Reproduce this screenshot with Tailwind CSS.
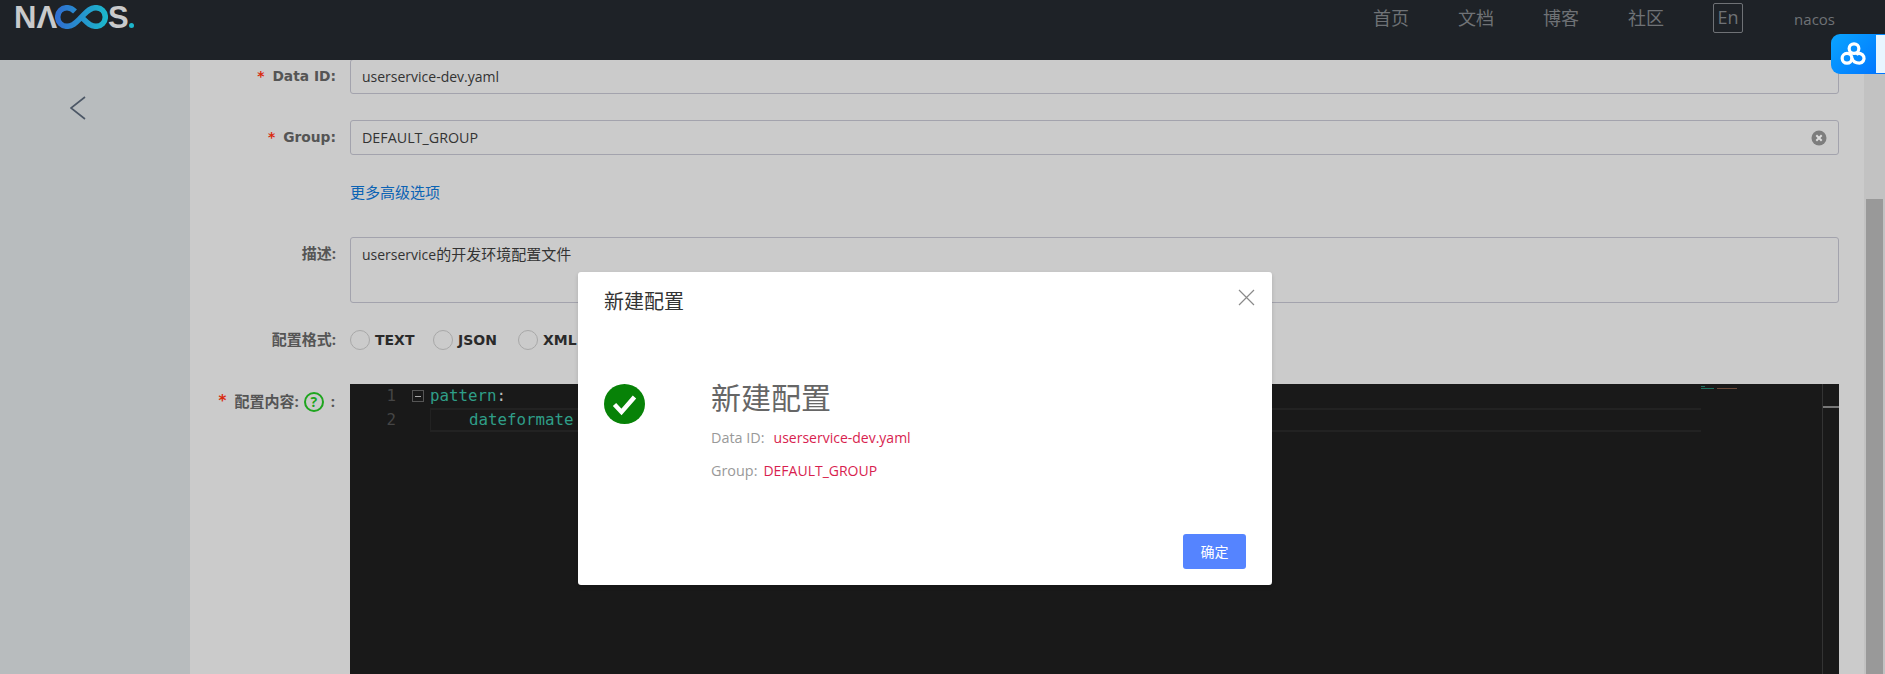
<!DOCTYPE html>
<html lang="zh-CN">
<head>
    <meta charset="UTF-8">
    <title>Nacos</title>
    <script src="https://cdn.jsdelivr.net/npm/@tailwindcss/browser@4"></script>
</head>
<body class="font-['Open_Sans','Noto_Sans_CJK_SC',sans-serif] text-sm">
    <div class="relative w-[1885px] h-[674px] overflow-hidden flex flex-col bg-[#cbcbcb]">
        <!-- header -->
        <header class="relative z-10 h-[60px] shrink-0 bg-[#1e2227] flex items-start">
            <div class="flex items-start pl-[14px] text-[#c9cacb] font-['Liberation_Sans',sans-serif] font-bold text-[31px] leading-[35px]">
                <span>NΛ</span>
                <svg class="mt-[5px] -ml-[2px]" width="53" height="24" viewBox="0 0 53 24" fill="none">
                    <defs>
                        <linearGradient id="inf" x1="0" y1="0" x2="1" y2="0">
                            <stop offset="0" stop-color="#2f6fd0"/>
                            <stop offset="1" stop-color="#1cb6cc"/>
                        </linearGradient>
                    </defs>
                    <path d="M20 6.500C17.500 4 15 2.700 12 2.700 6.600 2.700 2.700 6.800 2.700 12S6.600 21.300 12 21.300c6.500 0 10-5 14.500-9.300S34 2.700 41 2.700c5.400 0 9.300 4.100 9.300 9.300S46.400 21.300 41 21.300c-6.500 0-10-5-14.500-9.300" stroke="url(#inf)" stroke-width="5.500"/>
                </svg>
                <span>S</span>
                <span class="mt-[23px] w-[5px] h-[5px] rounded-full bg-[#1cb6cc]"></span>
            </div>
            <nav class="ml-auto mr-[50px] flex items-start text-[#6f7276]">
                <div class="flex gap-[49px] text-[18px] leading-[36px]">
                    <span>首页</span>
                    <span>文档</span>
                    <span>博客</span>
                    <span>社区</span>
                </div>
                <span class="ml-[49px] mt-[3px] w-[30px] h-[30px] border border-[#6f7276] rounded-[2px] text-[18px] leading-[27px] text-center">En</span>
                <span class="ml-[51px] text-[15px] leading-[38px]">nacos</span>
            </nav>
        </header>

        <main class="flex-1 flex min-h-0">
            <!-- sidebar -->
            <aside class="w-[190px] shrink-0 bg-[#b8bcbe] pl-[70px] pt-[36px]">
                <svg width="16" height="24" viewBox="0 0 16 24" fill="none"><path d="M15 1 1 12l14 11" stroke="#4c5766" stroke-width="1.600"/></svg>
            </aside>

            <!-- form -->
            <section class="flex-1 min-w-0 pr-[25px] text-[#333]">
                <div class="flex items-center h-[34px]">
                    <label class="w-[146px] text-right font-bold text-[#555] font-['DejaVu_Sans','Noto_Sans_CJK_SC',sans-serif] text-[13.800px]"><span class="text-[#d92a0e] mr-2">*</span>Data ID:</label>
                    <div class="ml-[14px] flex-1 h-[35px] -mt-px border border-[#a3a3ad] rounded-[3px] px-[11px] leading-[33px]">userservice-dev.yaml</div>
                </div>
                <div class="flex items-center mt-[26px] h-[35px]">
                    <label class="w-[146px] text-right font-bold text-[#555] font-['DejaVu_Sans','Noto_Sans_CJK_SC',sans-serif] text-[13.800px]"><span class="text-[#d92a0e] mr-2">*</span>Group:</label>
                    <div class="ml-[14px] flex-1 h-[35px] border border-[#a3a3ad] rounded-[3px] pl-[11px] pr-[11px] leading-[33px] flex items-center justify-between">
                        <span class="text-[14.300px]">DEFAULT_GROUP</span>
                        <svg width="16" height="16" viewBox="0 0 16 16"><circle cx="8" cy="8" r="7.500" fill="#7d7d7d"/><path d="M5.300 5.300l5.400 5.400M10.700 5.300l-5.400 5.400" stroke="#ddd" stroke-width="2"/></svg>
                    </div>
                </div>
                <div class="mt-[27px] ml-[160px] leading-[20px] text-[15px] text-[#0b63b4]">更多高级选项</div>
                <div class="flex items-start mt-[35px]">
                    <label class="w-[146px] text-right font-bold text-[15px] text-[#555] leading-[32px]">描述:</label>
                    <div class="ml-[14px] flex-1 h-[66px] border border-[#a3a3ad] rounded-[3px] px-[11px] pt-[6px] leading-[20px]">userservice<span class="text-[15px]">的开发环境配置文件</span></div>
                </div>
                <div class="flex items-center mt-[23px] h-[28px]">
                    <label class="w-[146px] text-right font-bold text-[15px] text-[#555]">配置格式:</label>
                    <div class="ml-[14px] flex items-center font-bold text-[#2a2a2a] font-['DejaVu_Sans',sans-serif] text-[14px]">
                        <span class="w-[20px] h-[20px] rounded-full border border-[#a8a8a8]"></span>
                        <span class="ml-[5px] w-[58px]">TEXT</span>
                        <span class="w-[20px] h-[20px] rounded-full border border-[#a8a8a8]"></span>
                        <span class="ml-[5px] w-[60px]">JSON</span>
                        <span class="w-[20px] h-[20px] rounded-full border border-[#a8a8a8]"></span>
                        <span class="ml-[5px]">XML</span>
                    </div>
                </div>
                <div class="flex items-start mt-[30px]">
                    <label class="w-[146px] flex items-center justify-end h-[36px] font-bold text-[15px] text-[#555]">
                        <span class="text-[#d92a0e] mr-2 font-['DejaVu_Sans',sans-serif]">*</span>配置内容:
                        <span class="ml-[5px] mr-[7px] w-[20px] h-[20px] rounded-full border-2 border-[#1ea51e] text-[#1ea51e] text-[14px] leading-[16px] text-center">?</span>
                        <span class="pr-[1px]">:</span>
                    </label>
                    <!-- editor -->
                    <div class="relative ml-[14px] flex-1 h-[290px] bg-[#191919] font-['DejaVu_Sans_Mono',monospace] text-[15.800px] leading-[24px] overflow-hidden">
                        <div class="flex h-[24px]">
                            <span class="w-[47px] pr-[1px] text-right text-[#454545]">1</span>
                            <span class="ml-[15px] mt-[6px] w-[12px] h-[12px] border border-[#555] flex items-center justify-center"><span class="w-[6px] h-px bg-[#aaa]"></span></span>
                            <span class="ml-[6px] text-[#2f9e88]">pattern<span class="text-[#bbb]">:</span></span>
                        </div>
                        <div class="flex h-[24px]">
                            <span class="w-[47px] pr-[1px] text-right text-[#454545]">2</span>
                            <span class="ml-[33px] w-[1271px] h-[24px] box-border pl-[38px] text-[#2f9e88] border-y-2 border-l border-[#222] leading-[20px]">dateformate</span>
                        </div>
                        <div class="absolute left-[1351px] top-[2px] w-[36px] flex flex-col gap-px">
                            <div class="w-[4px] h-px bg-[#1d6f5f]"></div>
                            <div class="w-[36px] h-px bg-[linear-gradient(90deg,#1d6f5f_35%,#191919_35%,#191919_45%,#6b4a3a_45%)]"></div>
                        </div>
                        <div class="absolute right-0 top-0 bottom-0 w-[17px] border-l border-[#333]">
                            <div class="mt-[22px] h-[2px] bg-[#777]"></div>
                        </div>
                    </div>
                </div>
            </section>

            <!-- scrollbar -->
            <div class="w-[21px] shrink-0 bg-[#c2c2c2] pl-[2px] pr-[2px] pt-[139px]">
                <div class="h-full bg-[#999]"></div>
            </div>
        </main>

        <!-- baidu widget -->
        <div class="absolute z-20 left-[1831px] top-[34px] w-[54px] h-[40px] rounded-l-[9px] bg-[linear-gradient(135deg,#0aa5ff,#0072ff)] pl-[9px] pt-[7px]">
            <svg width="28" height="26" viewBox="0 0 26 24" fill="none" stroke="#fff" stroke-width="3">
                <circle cx="13" cy="7" r="4.500"/>
                <circle cx="6.500" cy="16" r="4.500"/>
                <path d="M11 16c1 3 3.500 4.500 7 4.500a4.500 4.500 0 1 0-3-8"/>
            </svg>
        </div>
        <div class="absolute z-20 left-[1876px] top-[35px] w-[9px] h-[38px] bg-[#e8f5ff]"></div>

        <!-- dialog -->
        <div class="absolute z-30 left-[578px] top-[272px] w-[694px] h-[313px] bg-white rounded-[3px] shadow-[0_2px_4px_rgba(0,0,0,0.15)] flex flex-col">
            <div class="relative flex justify-between pl-[26px] pr-[17px] pt-[14px]">
                <span class="text-[20px] leading-[32px] text-[#333]">新建配置</span>
                <svg class="mt-[3px]" width="17" height="17" viewBox="0 0 17 17" fill="none"><path d="M1 1l15 15M16 1 1 16" stroke="#8a8a8a" stroke-width="1.200"/></svg>
            </div>
            <div class="flex pl-[26px] mt-[66px]">
                <svg width="41" height="40" viewBox="0 0 41 40"><ellipse cx="20.500" cy="20" rx="20.500" ry="20" fill="#078207"/><path d="M10.500 20.500l7 7.500 13-15" fill="none" stroke="#fff" stroke-width="4.500"/></svg>
                <div class="ml-[66px] -mt-[5px]">
                    <h3 class="text-[30px] leading-[38px] text-[#666]">新建配置</h3>
                    <p class="mt-[11px] leading-[20px] text-[14.400px] text-[#999]">Data ID:<span class="ml-[9px] text-sm text-[#d81e4f]">userservice-dev.yaml</span></p>
                    <p class="mt-[13px] leading-[20px] text-[14.400px] text-[#999]">Group:<span class="ml-[6px] text-sm text-[#d81e4f]">DEFAULT_GROUP</span></p>
                </div>
            </div>
            <div class="mt-auto flex justify-end pr-[26px] pb-[16px]">
                <button class="w-[63px] h-[35px] rounded-[3px] bg-[#5584ff] text-white text-sm">确定</button>
            </div>
        </div>
    </div>
</body>
</html>
